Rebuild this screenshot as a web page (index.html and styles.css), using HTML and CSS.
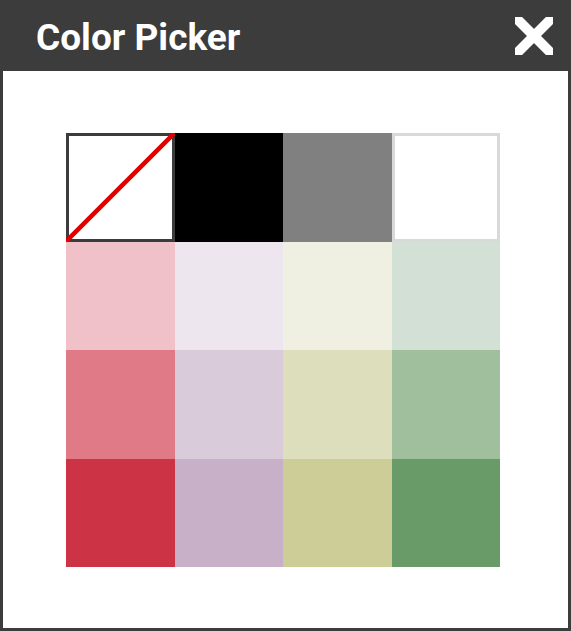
FILE: index.html
```html
<!DOCTYPE html>
<html lang="en">
<head>
    <meta charset="UTF-8">
    <meta name="viewport" content="width=device-width, initial-scale=1.0">
    <title>Color Picker</title>
    <link rel="stylesheet" href="styles.css">
</head>
<body>
    <div class="dialog">
        <header class="dialog-header">
            <h1>Color Picker</h1>
            <button class="close-button" aria-label="Close">
                <svg width="38" height="38" viewBox="0 0 38 38">
                    <path d="M0 0 L38 38 M38 0 L0 38" stroke="#fff" stroke-width="10" fill="none"/>
                </svg>
            </button>
        </header>
        <div class="dialog-body">
            <div class="swatches">
                <div class="swatch swatch-none">
                    <svg viewBox="0 0 100 100" preserveAspectRatio="none">
                        <line x1="0" y1="100" x2="100" y2="0" stroke="#e00000" stroke-width="4.5" vector-effect="non-scaling-stroke"/>
                    </svg>
                </div>
                <div class="swatch" style="background-color: #000000;"></div>
                <div class="swatch" style="background-color: #808080;"></div>
                <div class="swatch swatch-white"></div>

                <div class="swatch" style="background-color: #f0c1c9;"></div>
                <div class="swatch" style="background-color: #ede6ef;"></div>
                <div class="swatch" style="background-color: #eff0e2;"></div>
                <div class="swatch" style="background-color: #d3e0d5;"></div>

                <div class="swatch" style="background-color: #df7a86;"></div>
                <div class="swatch" style="background-color: #dacbda;"></div>
                <div class="swatch" style="background-color: #dddebb;"></div>
                <div class="swatch" style="background-color: #9fbf9d;"></div>

                <div class="swatch" style="background-color: #cc3446;"></div>
                <div class="swatch" style="background-color: #c8b1c8;"></div>
                <div class="swatch" style="background-color: #cdcd98;"></div>
                <div class="swatch" style="background-color: #689b68;"></div>
            </div>
        </div>
    </div>
</body>
</html>
```

FILE: styles.css
```css
/* Reset */
body, h1 {
    margin: 0;
    padding: 0;
}

body {
    font-family: Roboto, "Liberation Sans", Arial, sans-serif;
    background-color: #fff;
}

.dialog {
    width: 571px;
    height: 631px;
    box-sizing: border-box;
    border: 3px solid #3c3c3c;
    display: flex;
    flex-direction: column;
}

/* Header */
.dialog-header {
    height: 68px;
    background-color: #3c3c3c;
    display: flex;
    align-items: center;
    justify-content: space-between;
    padding: 0 15px 0 33px;
}

.dialog-header h1 {
    color: #fff;
    font-size: 37px;
    font-weight: 700;
    letter-spacing: 0;
}

.close-button {
    background: none;
    border: none;
    padding: 0;
    cursor: pointer;
    display: flex;
    margin-top: -2px;
}

.close-button svg {
    filter: blur(0.6px);
}

/* Body */
.dialog-body {
    flex: 1;
    background-color: #fff;
    padding: 62px 0 0 63px;
}

.swatches {
    width: 434px;
    height: 434px;
    display: grid;
    grid-template-columns: repeat(4, 1fr);
    grid-template-rows: repeat(4, 1fr);
}

.swatch {
    box-sizing: border-box;
    cursor: pointer;
}

.swatch-none {
    border: 3px solid #3c3c3c;
    background-color: #fff;
    position: relative;
}

.swatch-none svg {
    position: absolute;
    left: -3px;
    top: -3px;
    width: calc(100% + 6px);
    height: calc(100% + 6px);
}

.swatch-white {
    border: 3px solid #d9d9d9;
    background-color: #fff;
}
```
